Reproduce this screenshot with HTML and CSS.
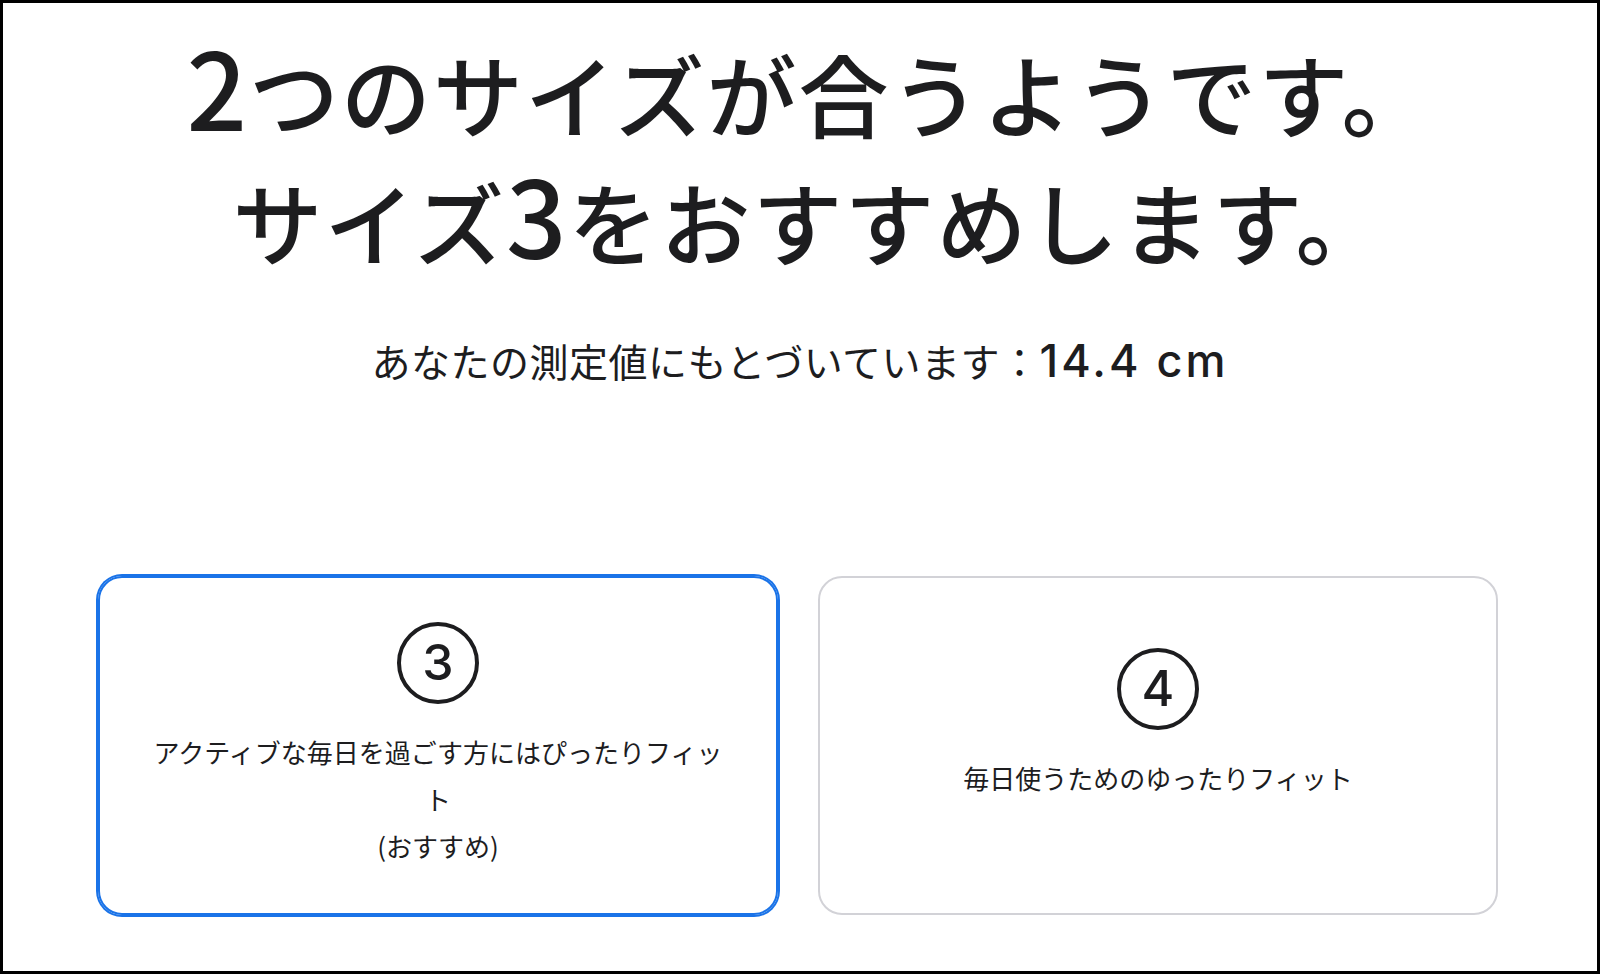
FILE: index.html
```html
<!DOCTYPE html>
<html lang="ja">

<head>
    <meta charset="UTF-8">
    <meta name="viewport" content="width=device-width, initial-scale=1.0">
    <title>サイズのおすすめ</title>
    <link rel="stylesheet" href="styles.css">
</head>

<body>

    <div class="page">

        <!-- 結果の見出し -->
        <h1 class="headline"><span class="num">2</span>つのサイズが合うようです。<br>サイズ<span class="num">3</span>をおすすめします。</h1>

        <p class="basis">あなたの測定値にもとづいています：<span class="value">14.4 cm</span></p>

        <!-- サイズの選択肢 -->
        <div class="sizes">
            <div class="size-card selected">
                <div class="size-num">3</div>
                <p class="size-desc">アクティブな毎日を過ごす方にはぴったりフィット<br>(おすすめ)</p>
            </div>
            <div class="size-card">
                <div class="size-num">4</div>
                <p class="size-desc">毎日使うためのゆったりフィット</p>
            </div>
        </div>

    </div>

</body>

</html>
```

FILE: styles.css
```css
html,
body {
    margin: 0;
    background: #fff;
}

body {
    font-family: "Noto Sans CJK JP", "Noto Sans", sans-serif;
    color: #1d1d1f;
}

.page {
    box-sizing: border-box;
    height: 100vh;
    border: 3px solid #000;
    display: flex;
    flex-direction: column;
    align-items: center;
}

.headline {
    margin: 25px 0 0;
    padding-left: 20px;
    font-size: 90px;
    line-height: 128px;
    font-weight: 500;
    letter-spacing: 2px;
    text-align: center;
}

.headline .num {
    font-size: 1.18em;
    line-height: 1;
}

.basis {
    margin: 47px 0 0;
    font-size: 39px;
    line-height: 58px;
    letter-spacing: 0.5px;
    text-align: center;
}

.basis .value {
    font-family: Inter, "Noto Sans", sans-serif;
    font-size: 45px;
    line-height: 1;
    font-weight: 500;
    letter-spacing: 3px;
}

.sizes {
    display: grid;
    grid-template-columns: 1fr 1fr;
    gap: 40px;
    width: 1400px;
    margin: 187px 4px 0 0;
}

.size-card {
    border: 2px solid #d2d2d7;
    border-radius: 24px;
    padding: 44px 48px;
    display: flex;
    flex-direction: column;
    align-items: center;
    justify-content: center;
    text-align: center;
}

.size-card.selected {
    border-color: #1a73e8;
    box-shadow: 0 0 0 2px #1a73e8;
}

.size-num {
    box-sizing: border-box;
    width: 82px;
    height: 82px;
    padding-bottom: 2px;
    border: 4px solid #1d1d1f;
    border-radius: 50%;
    display: flex;
    align-items: center;
    justify-content: center;
    font-family: Inter, "Noto Sans", sans-serif;
    font-size: 50px;
    font-weight: 500;
    line-height: 1;
}

.size-desc {
    margin: 24px 0 0;
    min-height: 89px;
    font-size: 26px;
    line-height: 47px;
}
```
